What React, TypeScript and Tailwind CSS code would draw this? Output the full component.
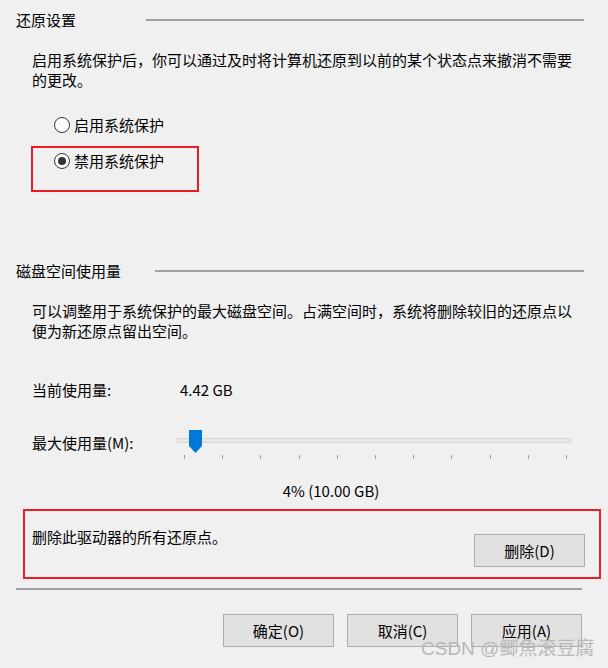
import React from "react";

const font = { fontFamily: '"Noto Sans CJK SC", "Noto Sans", sans-serif' };

function Radio({ checked, label }: { checked?: boolean; label: string }) {
  return (
    <div className="flex items-center h-[20px] pl-[54px] gap-[4px]">
      <div className="w-[16px] h-[16px] rounded-full border border-[#333333] bg-white flex items-center justify-center">
        {checked && <div className="w-[8px] h-[8px] rounded-full bg-[#333333]" />}
      </div>
      <span className="leading-[20px]">{label}</span>
    </div>
  );
}

function Btn({ children }: { children: React.ReactNode }) {
  return (
    <div className="w-[111px] h-[33px] bg-[#e1e1e1] border border-[#adadad] flex items-center justify-center leading-[20px]">
      {children}
    </div>
  );
}

export default function App() {
  const ticks = Array.from({ length: 11 });
  return (
    <div
      className="relative w-[608px] h-[668px] bg-[#f0f0f0] overflow-hidden text-[15px] text-black"
      style={font}
    >
      {/* Section 1 */}
      <div className="flex items-center h-[20px] mt-[10px] pl-[16px]">
        <span className="leading-[20px] whitespace-nowrap">还原设置</span>
        <div className="ml-[70px] w-[438px] h-[2px] bg-[#a0a0a0]" />
      </div>
      <div className="mt-[20px] pl-[32px] leading-[20px] whitespace-nowrap">
        启用系统保护后，你可以通过及时将计算机还原到以前的某个状态点来撤消不需要
        <br />
        的更改。
      </div>
      <div className="mt-[25px]">
        <Radio label="启用系统保护" />
      </div>
      <div className="mt-[16px]">
        <Radio checked label="禁用系统保护" />
      </div>

      {/* Section 2 */}
      <div className="flex items-center h-[20px] mt-[90px] pl-[16px]">
        <span className="leading-[20px] whitespace-nowrap">磁盘空间使用量</span>
        <div className="ml-[34px] w-[429px] h-[2px] bg-[#a0a0a0]" />
      </div>
      <div className="mt-[20px] pl-[32px] leading-[20px] whitespace-nowrap">
        可以调整用于系统保护的最大磁盘空间。占满空间时，系统将删除较旧的还原点以
        <br />
        便为新还原点留出空间。
      </div>
      <div className="mt-[39px] pl-[32px] flex h-[20px] leading-[20px]">
        <span className="w-[148px]">当前使用量:</span>
        <span>4.42 GB</span>
      </div>
      <div className="mt-[33px] pl-[32px] flex items-start">
        <span className="w-[145px] h-[20px] leading-[20px] whitespace-nowrap">最大使用量(M):</span>
        <div className="relative w-[394px] h-[28px] -mt-[3px]">
          <div className="absolute left-0 right-0 top-[8px] h-[5px] bg-[#e7e7e7] border border-[#d6d6d6]" />
          <svg className="absolute left-[12px] top-0" width="13" height="23" viewBox="0 0 13 23">
            <path d="M0 0 H13 V16 L6.5 23 L0 16 Z" fill="#0078d7" />
          </svg>
          <div className="absolute left-0 right-0 top-[25px] flex justify-between pl-[7px] pr-[4px]">
            {ticks.map((_, i) => (
              <div key={i} className="w-[1px] h-[4px] bg-[#a0a0a0]" />
            ))}
          </div>
        </div>
      </div>
      <div className="mt-[23px] ml-[231px] w-[200px] text-center h-[20px] leading-[20px]">
        4% (10.00 GB)
      </div>
      <div className="mt-[26px] pl-[32px] pr-[23px] flex items-start justify-between">
        <span className="h-[20px] leading-[20px]">删除此驱动器的所有还原点。</span>
        <div className="mt-[7px]">
          <Btn>删除(D)</Btn>
        </div>
      </div>
      <div className="mt-[21px] ml-[16px] w-[566px] h-[2px] bg-[#a0a0a0]" />
      <div className="mt-[24px] flex justify-end gap-[13px] pr-[26px]">
        <Btn>确定(O)</Btn>
        <Btn>取消(C)</Btn>
        <Btn>应用(A)</Btn>
      </div>

      {/* Annotation boxes */}
      <div className="absolute left-[31px] top-[146px] w-[168px] h-[46px] border-2 border-[#ed1c24]" />
      <div className="absolute left-[23px] top-[509px] w-[578px] h-[70px] border-2 border-[#ed1c24]" />

      {/* Watermark */}
      <div
        className="absolute left-[421px] top-[637px] text-[19px] leading-[24px] text-[#b8b8b8] whitespace-nowrap"
        style={{ fontFamily: '"Liberation Sans", "Noto Sans CJK SC", sans-serif' }}
      >
        CSDN @鲫魚滚豆腐
      </div>
    </div>
  );
}
